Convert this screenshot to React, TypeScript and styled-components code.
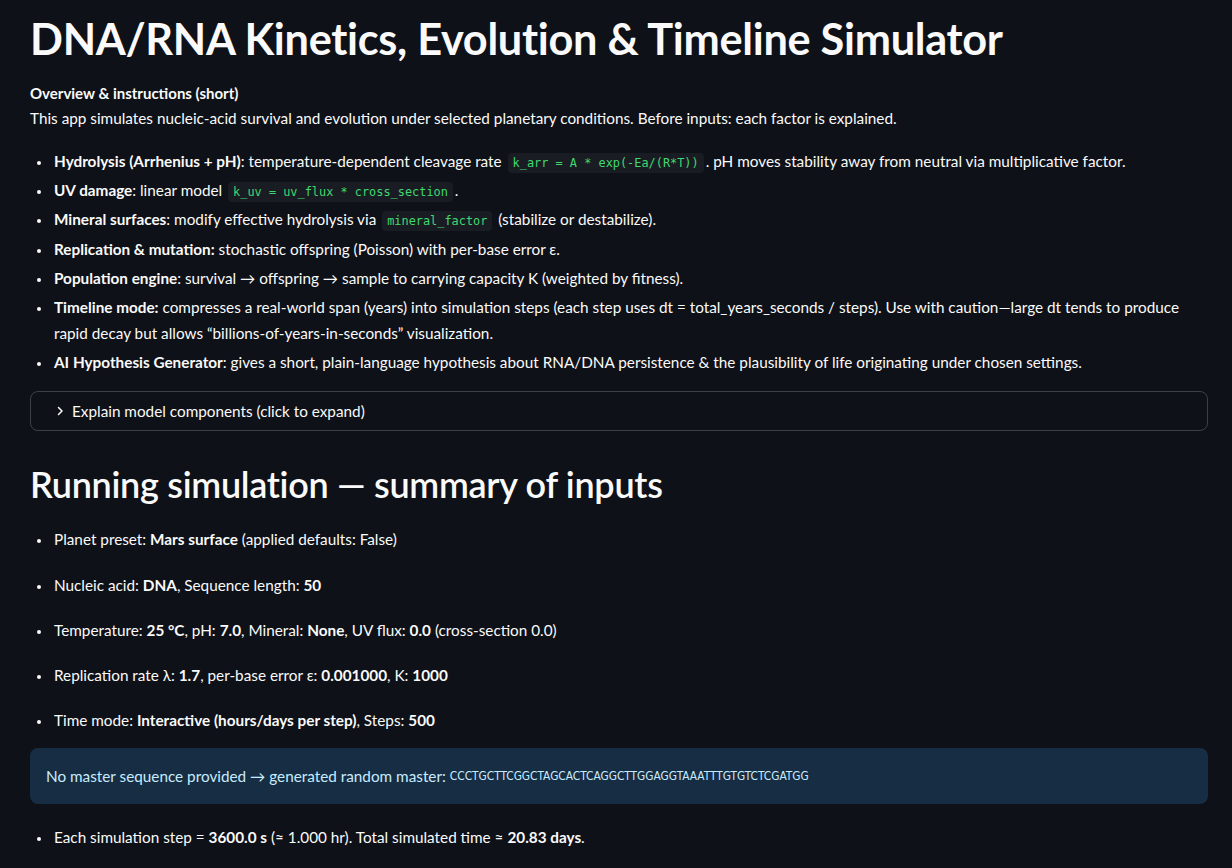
import React from "react";
import styled, { createGlobalStyle } from "styled-components";

const Global = createGlobalStyle`
  html, body { margin: 0; padding: 0; background: #0e1117; }
  body {
    color: #fafafa;
    font-family: Lato, "Noto Sans", sans-serif;
    font-size: 15.3px;
    -webkit-font-smoothing: antialiased;
  }
`;

const Main = styled.main`
  width: 1178px;
  padding: 12px 24px 40px 30px;
  box-sizing: content-box;
`;

const Title = styled.h1`
  margin: 0;
  font-size: 43.3px;
  font-weight: 700;
  line-height: 52px;
  letter-spacing: -0.3px;
`;

const Heading = styled.h2`
  margin: 30px 0 0;
  font-size: 36px;
  font-weight: 600;
  line-height: 46px;
  letter-spacing: -0.3px;
`;

const Caption = styled.div`
  margin-top: 18px;
  font-size: 15px;
  font-weight: 700;
  line-height: 22px;
`;

const Para = styled.p`
  margin: 1px 0 0;
  line-height: 26px;
`;

const List = styled.ul<{ $gap?: number; $top?: number }>`
  margin: ${(p) => p.$top ?? 0}px 0 0;
  padding-left: 22px;
  list-style: disc;
  line-height: 25.6px;
  li {
    margin: 0 0 ${(p) => p.$gap ?? 3.6}px 0;
    padding-left: 2px;
  }
  li:last-child { margin-bottom: 0; }
  li::marker { font-size: 13px; }
`;

const Code = styled.code`
  font-family: "DejaVu Sans Mono", "Liberation Mono", monospace;
  font-size: 11.9px;
  line-height: 1;
  color: #3fd96f;
  background: #1a1c23;
  border-radius: 4px;
  padding: 3px 5px;
  margin: 0 2px;
`;

const Expander = styled.div`
  margin-top: 16px;
  height: 40px;
  border: 1px solid rgba(250, 250, 250, 0.2);
  border-radius: 8px;
  display: flex;
  align-items: center;
  padding-left: 23px;
  gap: 6px;
  box-sizing: border-box;
`;

const Info = styled.div`
  margin-top: 14px;
  background: #172d43;
  color: #c7ebff;
  border-radius: 8px;
  height: 56px;
  display: flex;
  align-items: center;
  padding: 0 16px;
`;

const Seq = styled.span`
  font-family: "Liberation Sans Narrow", "DejaVu Sans Condensed", sans-serif;
  font-size: 11.8px;
  margin-left: 4px;
`;

const summary: React.ReactNode[] = [
  <>Planet preset: <b>Mars surface</b> (applied defaults: False)</>,
  <>Nucleic acid: <b>DNA</b>, Sequence length: <b>50</b></>,
  <>Temperature: <b>25 °C</b>, pH: <b>7.0</b>, Mineral: <b>None</b>, UV flux: <b>0.0</b> (cross-section 0.0)</>,
  <>Replication rate λ: <b>1.7</b>, per-base error ε: <b>0.001000</b>, K: <b>1000</b></>,
  <>Time mode: <b>Interactive (hours/days per step)</b>, Steps: <b>500</b></>,
];

export default function App() {
  return (
    <>
      <Global />
      <Main>
        <Title>DNA/RNA Kinetics, Evolution &amp; Timeline Simulator</Title>
        <Caption>Overview &amp; instructions (short)</Caption>
        <Para>
          This app simulates nucleic-acid survival and evolution under selected planetary conditions. Before inputs: each factor is explained.
        </Para>
        <List $top={18}>
          <li>
            <b>Hydrolysis (Arrhenius + pH)</b>: temperature-dependent cleavage rate <Code>k_arr = A * exp(-Ea/(R*T))</Code>. pH moves stability away from neutral via multiplicative factor.
          </li>
          <li>
            <b>UV damage</b>: linear model <Code>k_uv = uv_flux * cross_section</Code>.
          </li>
          <li>
            <b>Mineral surfaces</b>: modify effective hydrolysis via <Code>mineral_factor</Code> (stabilize or destabilize).
          </li>
          <li>
            <b>Replication &amp; mutation:</b> stochastic offspring (Poisson) with per-base error ε.
          </li>
          <li>
            <b>Population engine</b>: survival → offspring → sample to carrying capacity K (weighted by fitness).
          </li>
          <li>
            <b>Timeline mode:</b> compresses a real-world span (years) into simulation steps (each step uses dt = total_years_seconds / steps). Use with caution—large dt tends to produce rapid decay but allows “billions-of-years-in-seconds” visualization.
          </li>
          <li>
            <b>AI Hypothesis Generator</b>: gives a short, plain-language hypothesis about RNA/DNA persistence &amp; the plausibility of life originating under chosen settings.
          </li>
        </List>
        <Expander>
          <svg width="12" height="12" viewBox="0 0 24 24" fill="none" stroke="#fafafa" strokeWidth="3" strokeLinecap="round" strokeLinejoin="round">
            <path d="M9 5l7 7-7 7" />
          </svg>
          <span>Explain model components (click to expand)</span>
        </Expander>
        <Heading>Running simulation — summary of inputs</Heading>
        <List $top={20} $gap={19.7}>
          {summary.map((s, i) => (
            <li key={i}>{s}</li>
          ))}
        </List>
        <Info>
          No master sequence provided → generated random master:
          <Seq>CCCTGCTTCGGCTAGCACTCAGGCTTGGAGGTAAATTTGTGTCTCGATGG</Seq>
        </Info>
        <List $top={21}>
          <li>
            Each simulation step = <b>3600.0 s</b> (≈ 1.000 hr). Total simulated time ≈ <b>20.83 days</b>.
          </li>
        </List>
      </Main>
    </>
  );
}
